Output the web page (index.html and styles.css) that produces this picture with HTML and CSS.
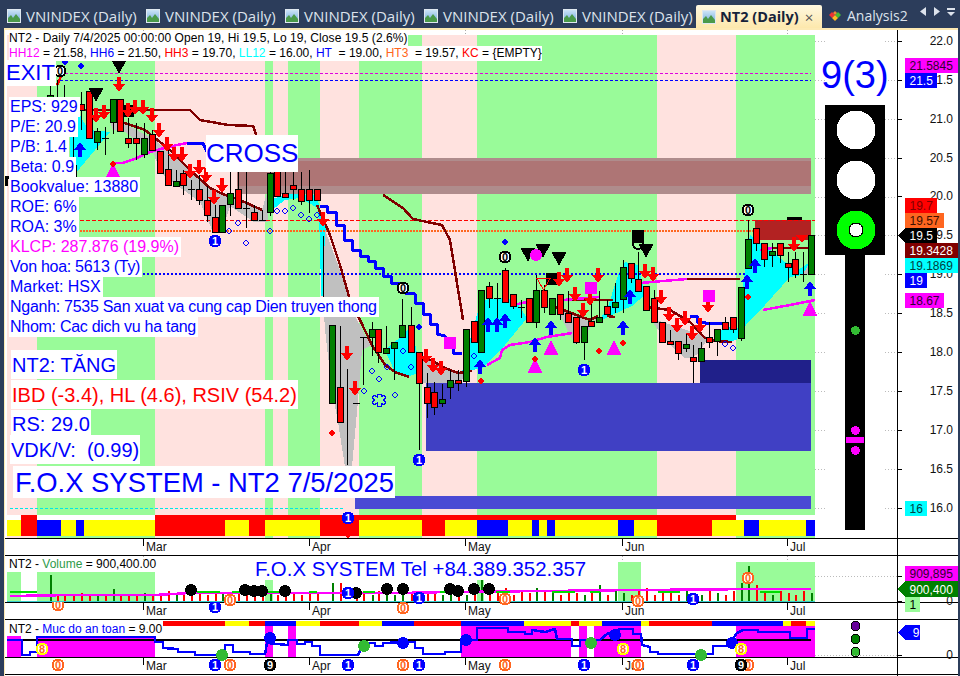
FILE: index.html
```html
<!DOCTYPE html>
<html lang="en">
<head>
<meta charset="utf-8">
<title>NT2 (Daily)</title>
<link rel="stylesheet" href="styles.css">
</head>
<body>
<div class="app">
  <nav class="tabs">
    <div class="tab"><svg class="ico" viewBox="0 0 14 14"><use href="#chart-ico"/></svg><span>VNINDEX (Daily)</span></div>
    <div class="tab"><svg class="ico" viewBox="0 0 14 14"><use href="#chart-ico"/></svg><span>VNINDEX (Daily)</span></div>
    <div class="tab"><svg class="ico" viewBox="0 0 14 14"><use href="#chart-ico"/></svg><span>VNINDEX (Daily)</span></div>
    <div class="tab"><svg class="ico" viewBox="0 0 14 14"><use href="#chart-ico"/></svg><span>VNINDEX (Daily)</span></div>
    <div class="tab tab-short"><svg class="ico" viewBox="0 0 14 14"><use href="#chart-ico"/></svg><span>VNINDEX (Daily)</span></div>
    <div class="tab tab-active"><svg class="ico" viewBox="0 0 14 14"><use href="#chart-ico"/></svg><b>NT2 (Daily)</b><i class="close">×</i></div>
    <div class="tab tab-analysis">
      <svg class="ico" viewBox="0 0 14 14"><path d="M1 6 4 3l3 3-3 3z" fill="#e33"/><path d="M7 6l3-3 3 3-3 3z" fill="#4b3"/><path d="M4 9l3-3 3 3-3 3z" fill="#fb2"/><path d="M5 4l2-2 2 2-2 2z" fill="#e83"/></svg>
      <span>Analysis2</span>
    </div>
    <div class="tab-tools">
      <svg class="tool" viewBox="0 0 10 12"><path d="M8 1v9L2 5.500z"/></svg>
      <svg class="tool" viewBox="0 0 10 12"><path d="M2 1v9l6-4.500z"/></svg>
      <svg class="tool tool-wide" viewBox="0 0 10 12"><path d="M1 2h8v2H1zM1 6h8L5 10z"/></svg>
    </div>
  </nav>
  <svg class="defs"><defs>
    <linearGradient id="sky" x1="0" y1="0" x2="0" y2="1"><stop offset="0" stop-color="#cfe6f8"/><stop offset="1" stop-color="#6da7dc"/></linearGradient>
    <symbol id="chart-ico" viewBox="0 0 14 14"><rect x=".5" y=".5" width="13" height="13" fill="url(#sky)" stroke="#dfe8f0"/><path d="M1 13V9l3-3 2 3 3-4 4 5v3z" fill="#4a9a4a"/></symbol>
  </defs></svg>

  <main class="workspace">
    <section class="row row-price">
      <div class="plot">
        <svg id="price" width="892" height="508" viewBox="5 30 892 508"></svg>
        <div class="legend">
          <div class="legend-top">NT2 - Daily 7/4/2025 00:00:00 Open 19, Hi 19.5, Lo 19, Close 19.5 (2.6%)</div>
          <div><span class="c-mag">HH12</span> = 21.58, <span class="c-blue">HH6</span> = 21.50, <span class="c-red">HH3</span> = 19.70, <span class="c-cyan">LL12</span> = 16.00, <span class="c-blue">HT</span>&nbsp; = 19.00, <span class="c-orange">HT3</span>&nbsp; = 19.57, <span class="c-red">KC</span> = {EMPTY}</div>
        </div>
        <div class="exit">EXIT</div>
        <div class="cross">CROSS</div>
        <div class="facts">
          <div>EPS: 929</div><div>P/E: 20.9</div><div>P/B: 1.4</div><div>Beta: 0.9</div>
          <div>Bookvalue: 13880</div><div>ROE: 6%</div><div>ROA: 3%</div>
          <div class="c-mag">KLCP: 287.876 (19.9%)</div>
          <div class="tight">Von hoa: 5613 (Ty)</div><div>Market: HSX</div>
          <div class="tight">Nganh: 7535 San xuat va cung cap Dien truyen thong</div>
          <div class="tight">Nhom: Cac dich vu ha tang</div>
        </div>
        <div class="signals">
          <div class="s1">NT2: TĂNG</div>
          <div class="s2 c-red">IBD (-3.4), HL (4.6), RSIV (54.2)</div>
          <div class="s3">RS: 29.0</div>
          <div class="s4">VDK/V:&nbsp; (0.99)</div>
        </div>
        <div class="brand">F.O.X SYSTEM - NT2 7/5/2025</div>
        <div class="rating">9(3)</div>
      </div>
      <svg class="scale" id="price-scale" width="60" height="508" viewBox="898 30 60 508"></svg>
    </section>
    <section class="row row-axis">
      <svg class="axis" id="axis1" width="892" height="16" viewBox="5 539 892 16"></svg><div class="scale-blank"></div>
    </section>
    <section class="row row-vol">
      <div class="plot">
        <svg id="vol" width="892" height="46" viewBox="5 556 892 46"></svg>
        <div class="pane-title">NT2 - <span class="c-vol">Volume</span> = 900,400.00</div>
        <div class="phone">F.O.X SYSTEM Tel +84.389.352.357</div>
      </div>
      <svg class="scale" id="vol-scale" width="60" height="46" viewBox="898 556 60 46"></svg>
    </section>
    <section class="row row-axis">
      <svg class="axis" id="axis2" width="892" height="16" viewBox="5 603 892 16"></svg><div class="scale-blank"></div>
    </section>
    <section class="row row-safe">
      <div class="plot">
        <svg id="safe" width="892" height="37" viewBox="5 620 892 37"></svg>
        <div class="pane-title pane-title-safe">NT2 - <span class="c-blue">Muc do an toan</span> = 9.00</div>
      </div>
      <svg class="scale" id="safe-scale" width="60" height="37" viewBox="898 620 60 37"></svg>
    </section>
    <section class="row row-axis">
      <svg class="axis" id="axis3" width="892" height="16" viewBox="5 658 892 16"></svg><div class="scale-blank"></div>
    </section>
    <div class="row row-end"><div class="end-plot"></div><div class="scale-blank"></div></div>
  </main>
</div>
<script src="chart.js"></script>
</body>
</html>
```

FILE: styles.css
```css
* { box-sizing: border-box; }
html, body { margin: 0; padding: 0; }
body { width: 960px; height: 676px; overflow: hidden; background: #2c3d5b; font-family: "Liberation Sans", Arial, sans-serif; }
.app { width: 960px; height: 676px; display: flex; flex-direction: column; }

.tabs { height: 28px; display: flex; align-items: stretch; flex: none; color: #dde3ec; font: 15px "Open Sans", sans-serif; }
.tab { width: 139px; display: flex; align-items: center; gap: 5px; padding: 3px 0 0 7px; white-space: nowrap; }
.tab-short { width: 140px; }
.tab-active { width: 126px; margin-top: 5px; padding: 0 0 0 6px; gap: 4px; background: linear-gradient(#fff8e0, #fde8ac); color: #16233a; border-radius: 2px 2px 0 0; }
.tab-active b { font-size: 14.500px; }
.close { font-style: normal; font-size: 15px; color: #555; margin-left: 2px; }
.tab-analysis { width: 96px; padding-left: 6px; font-size: 14px; }
.ico { width: 14px; height: 14px; flex: none; }
.defs { position: absolute; width: 0; height: 0; }
.tab-tools { display: flex; align-items: center; gap: 4px; padding: 0 0 4px 0; }
.tool { width: 10px; height: 12px; fill: #dde3ec; }

.workspace { flex: 1; margin: 0 2px 0 4px; background: #fff; border-top: 2px solid #fdeab4; border-left: 1px solid #fdeab4; display: flex; flex-direction: column; }
.row { display: flex; flex: none; }
.row-price { height: 509px; border-bottom: 1px solid #000; }
.row-axis { height: 17px; border-bottom: 1px solid #000; }
.row-vol { height: 47px; border-bottom: 1px solid #000; }
.row-safe { height: 38px; border-bottom: 1px solid #000; }
.row-end { flex: 1; }
.end-plot { width: 892px; }
.plot { position: relative; width: 892px; flex: none; }
.plot svg, .axis, .scale { display: block; flex: none; overflow: visible; }
.plot svg *, .axis *, .scale * { shape-rendering: crispEdges; }
.axis { width: 892px; }
.scale-blank { flex: 1; }
.row > svg.scale, .scale-blank { box-shadow: -1px 0 0 #000; margin-left: 1px; }
svg text { font-family: "Liberation Sans", Arial, sans-serif; font-size: 12px; }
svg text.digit { font-size: 11px; font-weight: bold; text-anchor: middle; }
svg text.tick { text-anchor: end; fill: #111; }
svg text.month { fill: #111; }
.c-mag { color: #ff00ff; }
.c-blue { color: #0000ff; }
.c-red { color: #ff0000; }
.c-cyan { color: #00ffff; }
.c-orange { color: #ff6620; }
.c-vol { color: #2e9b4a; }

.legend { position: absolute; top: 1px; left: 4px; font-size: 12px; line-height: 15px; color: #000; display: flex; flex-direction: column; align-items: flex-start; }
.legend div { background: #fff; height: 15px; white-space: nowrap; }
.legend-top { letter-spacing: 0.07px; }
.exit { position: absolute; top: 30px; left: 1px; width: 50px; height: 26px; background: #fff; color: #00f; font-size: 22px; line-height: 26px; }
.cross { position: absolute; top: 105px; left: 201px; width: 92px; height: 37px; background: #fff; color: #00f; font-size: 26px; line-height: 37px; white-space: nowrap; }
.facts { position: absolute; top: 67px; left: 4px; display: flex; flex-direction: column; align-items: flex-start; }
.facts div { height: 20px; padding: 0 2px 0 1px; background: #fff; color: #00f; font-size: 16px; line-height: 20px; white-space: nowrap; }
.facts .c-mag { color: #ff00ff; }
.facts .tight { letter-spacing: -0.28px; }
.signals { position: absolute; top: 320px; left: 6px; display: flex; flex-direction: column; align-items: flex-start; font-size: 20px; color: #00f; white-space: nowrap; }
.signals div { background: #fff; padding: 0 1px; }
.s1 { height: 29px; line-height: 30px; margin-bottom: 1px; }
.signals .s2 { height: 29px; line-height: 30px; color: #f00; margin-bottom: 1px; }
.s3 { height: 25px; line-height: 28px; }
.s4 { height: 29px; line-height: 30px; margin-left: -1px; }
.brand { position: absolute; top: 436px; left: 8px; height: 32px; padding: 0 1px 0 2px; background: #fff; color: #00f; font-size: 27.400px; line-height: 33px; white-space: nowrap; }
.rating { position: absolute; top: 23px; left: 816px; color: #00f; font-size: 38px; line-height: 44px; }
.pane-title { position: absolute; top: 1px; left: 4px; font-size: 12px; line-height: 14px; color: #000; white-space: nowrap; }
.pane-title-safe { background: #fff; top: 2px; }
.phone { position: absolute; top: 1px; left: 250px; color: #00f; font-size: 20.400px; line-height: 24px; white-space: nowrap; }
```

FILE: chart.js
```js
const rect = (x, y, w, h, f) => `<rect x="${x}" y="${y}" width="${w}" height="${h}" fill="${f}"/>`;
const line = (x1, y1, x2, y2, s, w = 1, d = '') => `<line x1="${x1}" y1="${y1}" x2="${x2}" y2="${y2}" stroke="${s}" stroke-width="${w}" ${d ? `stroke-dasharray="${d}"` : ''}/>`;
const poly = (p, s, w = 2.5) => `<polyline points="${p}" fill="none" stroke="${s}" stroke-width="${w}" stroke-linejoin="round"/>`;
const area = (p, f) => `<polygon points="${p}" fill="${f}"/>`;
const txt = (x, y, t, c, f = '') => `<text x="${x}" y="${y}" class="${c}" ${f ? `fill="${f}"` : ''}>${t}</text>`;
const GREEN = '#99fb99', PINK = '#ffe2df', RED = '#ff0000', BLUE = '#0000ff', MAG = '#ff00ff', YEL = '#ffff00', CYAN = '#00ffff', ORG = '#ff6620', DRED = '#800000';

const badge = (x, y, k, d) => {
  const st = {
    b: [BLUE, BLUE, '#fff'], z: ['#fff', '#000', '#000'], o: ['#fff', ORG, ORG], k: ['#000', '#000', '#fff'], y: ['#fff', YEL, ORG]
  }[k];
  return `<circle cx="${x}" cy="${y}" r="5.500" fill="${st[0]}" stroke="${st[1]}" stroke-width="2"/>` + txt(x, y + 4, d, 'digit', st[2]);
};
const down = (x, y, h = 15) => area(`${x - 2},${y - h} ${x + 2},${y - h} ${x + 2},${y - 8} ${x + 6},${y - 8} ${x},${y} ${x - 6},${y - 8} ${x - 2},${y - 8}`, RED);
const up = (x, y, h = 15) => area(`${x - 2},${y + h} ${x + 2},${y + h} ${x + 2},${y + 8} ${x + 6},${y + 8} ${x},${y} ${x - 6},${y + 8} ${x - 2},${y + 8}`, BLUE);
const tri = (x, y, h = 15) => area(`${x},${y} ${x + 7.5},${y + h} ${x - 7.5},${y + h}`, MAG);
const inv = (x, y, h = 14) => area(`${x - 7.5},${y} ${x + 7.5},${y} ${x},${y + h}`, '#000');
const dia = (x, y, f = RED) => area(`${x},${y - 3.5} ${x + 3.5},${y} ${x},${y + 3.5} ${x - 3.5},${y}`, f);
const ring = (x, y) => `<polygon points="${x},${y - 3} ${x + 3},${y} ${x},${y + 3} ${x - 3},${y}" fill="none" stroke="${BLUE}"/>`;

const stripes = [[7, 37, PINK], [37, 155, GREEN], [155, 265, PINK], [265, 273, GREEN], [273, 288, PINK], [288, 320, GREEN], [320, 359, PINK], [359, 422, GREEN], [422, 477, PINK], [477, 657, GREEN], [657, 736, PINK], [736, 815, GREEN]];
const bar = [[7, 21, YEL], [21, 37, RED], [37, 61, BLUE], [61, 76, YEL], [76, 84, BLUE], [84, 155, YEL], [155, 225, RED], [225, 249, YEL], [249, 265, RED], [265, 320, YEL], [320, 359, RED], [359, 422, YEL], [422, 445, RED], [445, 477, YEL], [477, 508, BLUE], [508, 532, YEL], [532, 539, BLUE], [539, 547, YEL], [547, 555, BLUE], [555, 618, YEL], [618, 634, BLUE], [634, 657, YEL], [657, 712, RED], [712, 744, YEL], [744, 759, BLUE], [759, 806, YEL], [806, 815, BLUE]];

// x, wick top, body top, body bottom, wick bottom, kind
const candles = [
  [50, 70, 95, 190, 205, 'g'], [57, 80, 100, 104, 125, 'r'], [64, 85, 100, 104, 115, 'd'], [73, 100, 165, 185, 215, 'r'], [81, 92, 104, 110, 130, 'r'],
  [89, 91, 91, 138, 138, 'r'], [97, 128, 131, 142, 150, 'g'], [105, 127, 138, 138, 155, 'd'], [113, 99, 99, 122, 134, 'g'], [120, 99, 99, 131, 131, 'r'],
  [128, 118, 138, 143, 148, 'r'], [136, 123, 138, 143, 160, 'r'], [144, 123, 138, 154, 158, 'g'], [152, 130, 134, 150, 150, 'r'], [160, 151, 151, 173, 173, 'r'],
  [168, 150, 169, 185, 185, 'r'], [176, 170, 181, 186, 186, 'g'], [183, 170, 173, 185, 195, 'r'], [191, 180, 189, 189, 200, 'd'], [199, 175, 189, 200, 205, 'r'],
  [207, 186, 200, 215, 222, 'r'], [215, 205, 217, 232, 232, 'r'], [222, 205, 205, 232, 232, 'g'], [230, 172, 193, 204, 216, 'g'], [238, 172, 189, 208, 208, 'r'],
  [246, 172, 208, 208, 228, 'd'], [254, 205, 212, 220, 220, 'r'], [262, 210, 220, 220, 220, 'd'], [270, 165, 173, 212, 216, 'g'], [277, 150, 165, 196, 196, 'r'],
  [285, 172, 193, 197, 197, 'r'], [293, 150, 185, 189, 200, 'r'], [301, 172, 189, 201, 205, 'r'], [309, 170, 189, 200, 213, 'r'], [317, 189, 189, 200, 200, 'r'],
  [323, 236, 296, 296, 300, 'w'],
  [332, 325, 325, 403, 403, 'g'], [340, 326, 387, 422, 422, 'r'], [347, 369, 420, 420, 465, 'w'], [356, 403, 403, 403, 403, 'd'], [363, 337, 337, 337, 385, 'd'],
  [372, 322, 329, 337, 356, 'g'], [378, 329, 329, 352, 363, 'r'], [386, 326, 348, 353, 353, 'g'], [394, 342, 342, 348, 380, 'g'], [402, 299, 325, 337, 337, 'g'],
  [411, 307, 325, 352, 352, 'r'], [419, 352, 352, 383, 450, 'r'], [427, 373, 387, 403, 418, 'r'], [434, 382, 392, 407, 415, 'r'], [442, 384, 399, 403, 407, 'g'],
  [450, 370, 380, 387, 399, 'g'], [458, 370, 380, 383, 391, 'r'], [466, 329, 329, 381, 387, 'g'], [474, 321, 321, 342, 342, 'r'], [481, 290, 290, 352, 352, 'g'],
  [489, 282, 286, 298, 308, 'r'], [497, 283, 298, 298, 318, 'd'], [505, 268, 270, 302, 302, 'r'], [513, 294, 294, 306, 309, 'r'], [521, 300, 307, 307, 318, 'd'],
  [529, 298, 298, 322, 322, 'r'], [536, 275, 290, 322, 328, 'g'], [544, 285, 290, 307, 313, 'r'], [552, 298, 298, 314, 314, 'g'], [560, 294, 294, 314, 320, 'r'],
  [568, 291, 313, 322, 322, 'r'], [576, 317, 317, 342, 344, 'r'], [584, 326, 326, 342, 360, 'g'], [591, 300, 321, 326, 326, 'r'], [599, 291, 317, 322, 322, 'g'],
  [607, 300, 306, 314, 314, 'r'], [615, 283, 302, 307, 313, 'g'], [623, 260, 267, 299, 313, 'g'], [631, 263, 263, 278, 283, 'r'], [638, 252, 279, 291, 291, 'r'],
  [646, 286, 286, 310, 310, 'r'], [654, 290, 298, 322, 322, 'r'], [662, 322, 322, 342, 342, 'r'], [670, 330, 341, 344, 344, 'r'], [678, 341, 341, 353, 360, 'r'],
  [686, 333, 344, 348, 352, 'g'], [693, 345, 357, 361, 383, 'r'], [701, 342, 348, 361, 361, 'g'], [709, 322, 337, 342, 348, 'r'], [717, 329, 329, 341, 356, 'g'],
  [725, 317, 322, 329, 329, 'r'], [733, 317, 317, 329, 333, 'r'], [741, 287, 287, 338, 341, 'g'], [748, 220, 239, 268, 268, 'g'], [756, 228, 228, 243, 251, 'r'],
  [764, 243, 243, 259, 267, 'r'], [772, 243, 251, 255, 267, 'g'], [780, 243, 243, 255, 263, 'r'], [788, 252, 263, 267, 282, 'r'], [795, 252, 259, 274, 278, 'r'],
  [803, 252, 274, 274, 282, 'd'], [811, 235, 235, 274, 274, 'g']
];

const candleSvg = c => {
  const [x, wt, bt, bb, wb, k] = c;
  let s = line(x + .5, wt, x + .5, wb, '#000');
  if (k === 'd') s += line(x - 3, bt + .5, x + 4, bt + .5, '#000');
  else if (k !== 'w') s += `<rect x="${x - 2.5}" y="${bt + .5}" width="6" height="${bb - bt}" fill="${k === 'r' ? RED : '#008000'}" stroke="#000"/>`;
  return s;
};

const p = [];
stripes.forEach(s => p.push(rect(s[0], 35, s[1] - s[0], 503, s[2])));
p.push(rect(7, 515, 808, 5, '#fff'), rect(21, 515, 16, 5, RED), rect(155, 515, 581, 5, RED));
bar.forEach(s => p.push(rect(s[0], 520, s[1] - s[0], 16, s[2])));

// zones
p.push(rect(237, 158, 574, 36, '#af8c8c'), rect(237, 161, 574, 25, '#ae7575'));
p.push(rect(755, 220, 56, 20, '#b22222'), rect(700, 360, 111, 24, '#20208a'), rect(426, 383, 385, 68, '#4040c4'), rect(355, 496, 456, 13, '#4a4ad4'));

// clouds
const G = '#c0c0c0';
p.push(
  area('110,122 122,122 155,140 185,165 215,192 240,200 262,210 264,203 267,193 268,222 254,222 230,206 222,232 213,232 200,202 163,175 153,153 125,132 113,130', G),
  area('70,115 80,115 88,130 110,132 75,174 70,174', CYAN),
  area('268,200 290,194 316,195 322,215 326,230 323,296 321,296 320,240 318,208 300,198 285,200 272,210', CYAN),
  area('325,230 340,270 352,310 365,335 372,345 362,350 358,400 352,467 345,467 338,422 332,390 325,330 323,296', G),
  area('385,350 403,335 412,325 420,372 410,376 395,372', CYAN),
  area('422,360 430,360 465,375 460,383 420,383', G),
  area('462,372 470,340 481,300 505,298 515,300 527,318 505,345 482,368', CYAN),
  area('555,305 590,322 597,318 590,328 575,345 565,325', G),
  area('597,322 607,310 618,275 625,262 638,265 645,295 632,306 610,316', CYAN),
  area('650,318 680,328 708,337 700,352 692,358 685,358 665,340', G),
  area('718,331 737,325 737,340 720,343', CYAN),
  area('736,340 745,270 750,235 770,250 785,262 795,272 810,262 808,274 790,277 765,305 748,322', CYAN),
  area('803,274 810,262 811,274', G)
);

// level lines
p.push(
  line(60, 73.5, 811, 73.5, '#e000e0', 1, '3 2'), line(60, 80.5, 811, 80.5, BLUE, 1, '3 2'),
  line(80, 220.5, 815, 220.5, RED, 1, '4 2'), line(80, 230.5, 755, 230.5, ORG, 2, '2 1'),
  line(143, 274, 745, 274, BLUE, 2, '2 2'), line(10, 508.5, 345, 508.5, '#00e8e8', 1, '3 2')
);

// indicator lines
p.push(
  poly('85,110 190,110 200,120 228,125 253,126 257,137', DRED),
  poly('383,195 403,208 413,219 432,223 442,225 450,240 463,320', DRED),
  poly('122,122 145,130 155,138 170,150 190,170 210,188 225,195 240,200 262,210', DRED),
  poly('317,205 330,235 340,265 350,300 360,320 372,345 385,365 395,372 409,377', DRED),
  poly('427,358 445,368 458,373 472,371', DRED),
  poly('550,305 590,320 598,316', DRED), poly('560,300 613,300', DRED), poly('607,316 615,317', DRED),
  poly('645,307 670,310 690,322 705,338 715,341 732,342', DRED),
  poly('687,279 740,279', DRED), poly('762,248 811,248', DRED),
  poly('113,163 123,163 137,158 150,152 168,147 187,143', MAG),
  poly('487,365 500,358 502,350 510,345 530,342 547,337 560,335 572,333', MAG),
  poly('513,305 527,302', MAG), poly('563,300 600,297', MAG),
  poly('640,283 687,279', MAG), poly('763,310 790,305 805,302 815,300', MAG), poly('760,250 772,248', MAG),
  poly('187,143 203,143 207,152', BLUE, 3),
  poly('320,206 327,206 327,212 336,212 336,225 344,225 344,240 352,240 352,250 360,250 360,256 368,256 368,261 375,261 375,268 383,268 383,276 391,276 391,283 399,283 405,293 415,294 415,303 423,303 423,314 430,314 430,324 437,324 437,334 445,336 453,348 453,353 462,353', BLUE, 3),
  poly('690,316 697,316 697,322 705,322 705,323 723,323', BLUE, 3),
  poly('57,85 63,72', RED)
);

candles.forEach(c => p.push(candleSvg(c)));

// markers
p.push(rect(5, 176, 12, 3, '#000'), rect(5, 176, 3, 10, '#000'), rect(124, 105, 10, 12, '#000'), rect(546, 273, 12, 12, '#000'), rect(632, 230, 12, 13, '#000'), rect(787, 217, 15, 3, '#000'));
p.push(`<circle cx="638" cy="244" r="5" fill="none" stroke="#000" stroke-width="2"/>`);
[[119, 60], [96, 88], [528, 248], [543, 244], [559, 252], [646, 244]].forEach(a => p.push(inv(a[0], a[1])));
[[119, 92], [96, 123], [104, 120], [128, 118], [135, 115], [143, 115], [152, 123], [159, 138], [167, 152], [174, 162], [182, 162], [190, 179], [199, 175], [206, 183], [214, 205], [222, 193], [323, 227], [347, 361], [355, 396], [426, 364], [433, 373], [441, 376], [559, 287], [567, 283], [598, 283], [575, 302], [590, 306], [583, 318], [645, 279], [653, 282], [661, 305], [669, 322], [677, 333], [685, 326], [692, 341], [700, 333], [708, 313], [794, 252]].forEach(a => p.push(down(a[0], a[1])));
p.push(down(802, 243, 8));
[[80, 142], [480, 359], [488, 317], [497, 317], [505, 313], [535, 337], [551, 320], [623, 320], [630, 289], [747, 274], [755, 258], [810, 281]].forEach(a => p.push(up(a[0], a[1])));
[[113, 163], [535, 358], [551, 340], [614, 340], [810, 301]].forEach(a => p.push(tri(a[0], a[1])));
p.push(`<polygon points="537,278.500 550,278.500 543.500,290" fill="none" stroke="${RED}"/>`, line(543.5, 290, 543.5, 296, RED));
p.push(dia(113, 164), dia(535, 359), dia(332, 433, RED), dia(481, 381), dia(599, 351), dia(623, 343), dia(748, 297));
[[65, 62], [81, 66], [505, 242], [419, 327]].forEach(a => p.push(dia(a[0], a[1], BLUE)));
[[229, 231], [246, 243], [238, 223], [270, 231], [277, 211], [285, 211], [293, 208], [301, 215], [309, 219], [317, 215], [372, 371], [379, 379], [364, 391], [387, 367], [395, 395], [403, 351], [411, 367], [474, 356], [725, 344], [733, 348]].forEach(a => p.push(ring(a[0], a[1])));
p.push(`<path d="M377 394h4v3l3-2 2 3-3 2 3 2-2 3-3-2v3h-4v-3l-3 2-2-3 3-2-3-2 2-3 3 2z" fill="none" stroke="${BLUE}"/>`);
[[444, 337], [585, 282], [703, 290]].forEach(a => p.push(rect(a[0], a[1], 12, 12, MAG)));
p.push(`<circle cx="536" cy="255" r="6" fill="${MAG}"/>`);
p.push(badge(60, 71, 'z', '0'), badge(403, 288, 'z', '0'), badge(505, 257, 'z', '0'), badge(748, 210, 'z', '0'));
p.push(badge(215, 241, 'b', '1'), badge(419, 460, 'b', '1'), badge(348, 518, 'b', '1'), badge(584, 370, 'b', '1'));
p.push(down(348, 539, 3));

// traffic light
p.push(
  rect(825, 105, 60, 150, '#000'), rect(845, 255, 20, 275, '#000'),
  `<circle cx="856" cy="130" r="19.500" fill="#fff"/><circle cx="856" cy="180" r="19.500" fill="#fff"/><circle cx="856" cy="230" r="19.500" fill="#00ff00"/><circle cx="856" cy="230" r="7" fill="#fff" stroke="#000"/>`,
  `<circle cx="855.500" cy="330.500" r="4.500" fill="#33bb33"/><circle cx="855.500" cy="430.500" r="4.500" fill="${MAG}"/><circle cx="855.500" cy="450.500" r="4.500" fill="${MAG}"/>`,
  rect(846, 437, 18, 6, MAG)
);
// grid ticks in the free right margin
[41, 80, 119, 158, 197, 235, 274, 313, 352, 391, 430, 469, 508].forEach(y => { p.push(line(815, y + .5, 825, y + .5, '#bbb', 1, '1 2'), line(885, y + .5, 897, y + .5, '#bbb', 1, '1 2')); });
[143, 465, 622, 787].forEach(x => p.push(line(x + .5, 30, x + .5, 35, '#aaa', 1, '1 2')));
document.getElementById('price').innerHTML = p.join('');

// scale helper
const scale = (ticks, tags) => {
  const s = [];
  ticks.forEach(t => { s.push(line(898, t[0] + .5, 902, t[0] + .5, '#000')); s.push(txt(953, t[0] + 4, t[1], 'tick')); });
  tags.forEach(t => {
    const [y, h, x2, f, c, label, arrow] = t;
    if (arrow) s.push(area(`898,${y + h / 2} 905,${y} 905,${y + h} `, f));
    s.push(rect(905, y, x2 - 905, h, f));
    s.push(txt(909.5, y + h - 3, label, 'tag', c));
  });
  return s.join('');
};
document.getElementById('price-scale').innerHTML = scale(
  [[41, '22.0'], [80, '21.5'], [119, '21.0'], [158, '20.5'], [196, '20.0'], [235, '19.5'], [274, '19.0'], [313, '18.5'], [352, '18.0'], [391, '17.5'], [430, '17.0'], [469, '16.5'], [508, '16.0']],
  [[58, 15, 958, MAG, '#300030', '21.5845'], [73, 15, 937, BLUE, '#fff', '21.5'], [198, 15, 937, RED, '#800000', '19.7'], [213, 15, 944, ORG, '#401000', '19.57'],
   [228, 15, 937, '#000', '#fff', '19.5', 1], [243, 15, 958, DRED, '#fff', '19.3428'], [258, 15, 958, CYAN, '#004040', '19.1869'], [273, 15, 927, BLUE, '#fff', '19'],
   [293, 15, 944, MAG, '#300030', '18.67'], [501, 15, 927, CYAN, '#004040', '16']]
);
document.getElementById('vol-scale').innerHTML = scale(
  [[576, ''], [601, '0']],
  [[566, 15, 958, MAG, '#300030', '909,895'], [581, 16, 958, '#008000', '#fff', '900,400', 1], [597, 15, 920, GREEN, '#000', '1']]
);
document.getElementById('safe-scale').innerHTML = scale(
  [[655, '0']],
  [[625, 15, 920, BLUE, '#fff', '&#160;9', 1]]
);

// axes
const months = [[143, 'Mar'], [309, 'Apr'], [465, 'May'], [622, 'Jun'], [787, 'Jul']];
const axis = (y0, marks) => {
  const s = [];
  months.forEach(m => s.push(line(m[0] + .5, y0, m[0] + .5, y0 + 7, '#000'), txt(m[0] + 3, y0 + 12, m[1], 'month')));
  return s.join('') + marks.join('');
};
document.getElementById('axis1').innerHTML = axis(539, []);
document.getElementById('axis2').innerHTML = axis(603, [badge(58, 605, 'o', '0'), badge(215, 607, 'b', '1'), badge(403, 608, 'o', '0')]);
document.getElementById('axis3').innerHTML = axis(658, [
  badge(58, 665, 'o', '0'), badge(230, 665, 'o', '0'), badge(403, 665, 'o', '0'), badge(505, 665, 'o', '0'), badge(638, 665, 'o', '0'), badge(748, 665, 'o', '0'),
  badge(215, 665, 'b', '1'), badge(348, 665, 'b', '1'), badge(419, 665, 'b', '1'), badge(584, 665, 'b', '1'), badge(693, 665, 'b', '1'),
  badge(270, 665, 'k', '9'), badge(741, 665, 'k', '9')
]);

// volume pane
const v = [];
[[7, 21, 572], [37, 155, 572], [265, 273, 580], [477, 484, 580], [618, 641, 562], [736, 815, 562]].forEach(s => v.push(rect(s[0], s[2], s[1] - s[0], 602 - s[2], GREEN)));
[143, 622, 787].forEach(x => v.push(line(x + .5, 556, x + .5, 562, '#aaa', 1, '1 2')));
const tall = { 50: 575, 113: 589, 324: 580, 332: 583, 340: 583, 348: 582, 481: 580, 505: 588, 536: 588, 599: 585, 615: 590, 646: 588, 741: 583, 748: 566, 756: 585 };
candles.forEach((c, i) => {
  if (c[5] === 'w') return;
  const x = c[0];
  const barTop = tall[x] || (x < 160 ? 593 + (i % 4) : 591 + (i % 3) * 2);
  v.push(line(x + .5, barTop, x + .5, 602, c[5] === 'g' ? '#008000' : RED, 2));
});
v.push(line(7, 601.5, 815, 601.5, '#33cccc', 1));
v.push(poly('10,596 73,595 155,595 190,593 400,593 450,592 640,590 760,589 811,589', MAG));
[[10, 37], [197, 220], [232, 250], [268, 285], [309, 317], [363, 375], [440, 462], [496, 510], [552, 575], [590, 600], [658, 680], [760, 780]].forEach(s => v.push(line(s[0], 592, s[1], 592, '#00dd00', 2)));
[[191, 590], [245, 590], [254, 591], [262, 591], [285, 591], [356, 593], [387, 589], [403, 589], [450, 589], [458, 591], [474, 589], [489, 589]].forEach(a => v.push(`<circle cx="${a[0]}" cy="${a[1]}" r="6" fill="#000"/>`));
v.push(badge(348, 593, 'b', '1'), badge(419, 598, 'b', '1'), badge(693, 599, 'b', '1'), badge(230, 600, 'o', '0'), badge(505, 599, 'o', '0'), badge(638, 601, 'o', '0'), badge(748, 578, 'o', '0'));
v.push(line(815, 576.5, 897, 576.5, '#bbb', 1, '1 2'));
document.getElementById('vol').innerHTML = v.join('');

// safety pane
const f = [];
const topSegs = [[163, 225, RED], [225, 249, YEL], [249, 265, RED], [265, 296, BLUE], [296, 320, YEL], [320, 359, RED], [359, 382, YEL], [382, 414, BLUE], [414, 461, RED], [461, 524, BLUE], [524, 571, YEL], [571, 579, RED], [579, 602, YEL], [602, 641, BLUE], [641, 649, YEL], [649, 712, RED], [712, 783, BLUE], [783, 791, YEL], [791, 806, RED], [806, 815, YEL]];
[[7, 21, 636], [37, 155, 637], [265, 273, 626], [288, 296, 626], [461, 571, 626], [579, 587, 626], [594, 641, 626], [736, 815, 626]].forEach(s => f.push(rect(s[0], s[2], s[1] - s[0], 657 - s[2], MAG)));
topSegs.forEach(s => f.push(rect(s[0], 621, s[1] - s[0], 5, s[2])));
f.push(rect(7, 639, 804, 2, '#000'));
f.push(poly('7,640 22,640 22,655 30,655 30,652 37,652 37,637 155,637 155,642 163,642 163,648 178,649 178,652 195,652 195,655 217,655 225,653 225,645 233,645 233,652 250,652 250,654 265,654 267,643 288,645 288,640 297,640 297,644 305,644 305,642 312,642 312,646 320,646 320,655 358,655 362,647 368,643 375,643 375,646 383,646 383,643 413,642 415,642 415,648 423,648 423,654 445,654 445,652 461,652 461,640 477,640 477,628 508,628 508,632 525,632 525,634 532,634 532,630 545,632 555,629 557,639 572,639 572,646 580,646 580,640 600,640 607,634 620,629 633,629 633,634 641,634 642,645 650,647 650,652 658,652 658,654 713,654 713,646 728,646 737,633 743,630 758,630 758,632 790,632 790,638 807,638 807,629 815,629', BLUE, 2.5));
[[270, 638], [403, 643], [466, 640], [615, 635], [732, 643]].forEach(a => f.push(`<circle cx="${a[0]}" cy="${a[1]}" r="6" fill="${BLUE}"/>`));
[[222, 655], [364, 646], [591, 643], [701, 655]].forEach(a => f.push(`<circle cx="${a[0]}" cy="${a[1]}" r="6" fill="#33bb33"/>`));
f.push(badge(42, 649, 'y', '8'), badge(623, 649, 'y', '8'), badge(741, 649, 'y', '8'));
[[626, '#660099'], [639, '#008000'], [652, '#33bb33']].forEach(a => f.push(`<circle cx="855.500" cy="${a[0]}" r="4.500" fill="${a[1]}" stroke="#000"/>`));
f.push(line(815, 655.5, 897, 655.5, '#bbb', 1, '1 2'));
document.getElementById('safe').innerHTML = f.join('');
```
